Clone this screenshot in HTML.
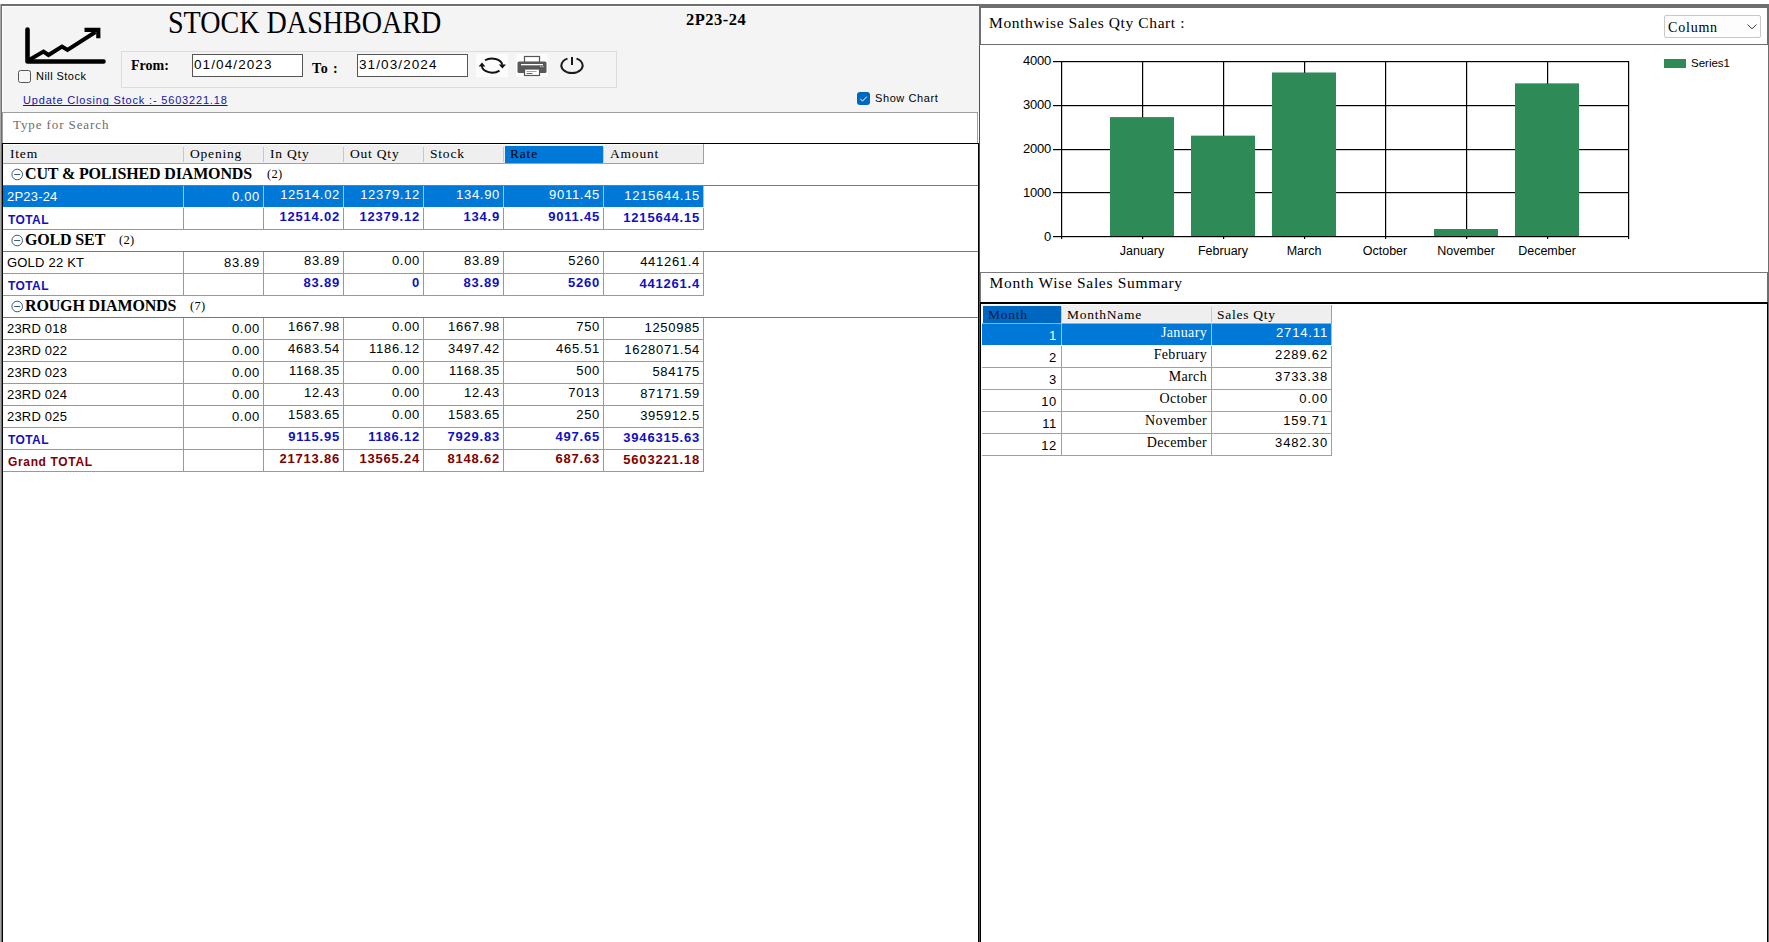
<!DOCTYPE html><html><head><meta charset="utf-8"><title>Stock Dashboard</title><style>
*{box-sizing:border-box;margin:0;padding:0}
html,body{width:1769px;height:942px;overflow:hidden;background:#fff;position:relative;font-family:'Liberation Sans', sans-serif}
.ab{position:absolute}
.t{position:absolute;white-space:pre;line-height:1}
.sr{font-family:'Liberation Serif', serif}
.sn{font-family:'Liberation Sans', sans-serif}
.num{letter-spacing:0.65px}
.gl{position:absolute;background:#a0a0a0}
</style></head><body>
<div class="ab" style="left:0px;top:4px;width:1769px;height:2px;background:#6e6e6e"></div>
<div class="ab" style="left:0px;top:4px;width:2px;height:938px;background:#6e6e6e;border-left:1px solid #a8a8a8"></div>
<div class="ab" style="left:2px;top:6px;width:977px;height:106px;background:#f4f4f4;border-top:1px solid #fff;border-left:1px solid #fff"></div>
<div class="ab" style="left:979px;top:6px;width:1px;height:137px;background:#7a7a7a"></div>
<svg class="ab" style="left:18px;top:22px" width="96" height="48" viewBox="18 22 96 48">
<path d="M27.5 29.5 V61.5 H103.5" fill="none" stroke="#000" stroke-width="4.6" stroke-linecap="round" stroke-linejoin="round"/>
<path d="M29 60 L43.5 51.5 L48.5 55 L62 46.5 L67.5 50 L95.5 32" fill="none" stroke="#000" stroke-width="4" stroke-linejoin="miter"/>
<path d="M84.5 29.8 H98.3 V38.3" fill="none" stroke="#000" stroke-width="4.2" stroke-linecap="butt" stroke-linejoin="miter"/>
</svg>
<div class="ab" style="left:18px;top:70px;width:13px;height:13px;border:1px solid #555;border-radius:2.5px;background:#f6f6f6"></div>
<div class="t" style="left:36px;top:71px;font-family:'Liberation Sans', sans-serif;font-size:11px;letter-spacing:0.45px;color:#000">Nill Stock</div>
<div class="t" style="left:168px;top:6.5px;font-family:'Liberation Serif', serif;font-size:31px;transform:scaleX(0.906);transform-origin:0 0;color:#000">STOCK DASHBOARD</div>
<div class="t" style="left:686px;top:12px;font-family:'Liberation Serif', serif;font-size:16.5px;font-weight:bold;letter-spacing:0.5px;color:#000">2P23-24</div>
<div class="ab" style="left:121px;top:51px;width:496px;height:37px;border:1px solid #dcdcdc"></div>
<div class="t" style="left:131px;top:58.8px;font-family:'Liberation Serif', serif;font-size:14px;font-weight:bold;color:#000">From:</div>
<div class="ab" style="left:192px;top:54px;width:111px;height:23px;background:#fff;border:1px solid #555"></div>
<div class="t" style="left:194px;top:58px;font-family:'Liberation Sans', sans-serif;font-size:13.5px;letter-spacing:1.1px;color:#000">01/04/2023</div>
<div class="t" style="left:312px;top:61.5px;font-family:'Liberation Serif', serif;font-size:14px;font-weight:bold;letter-spacing:0.8px;color:#000">To :</div>
<div class="ab" style="left:357px;top:54px;width:111px;height:23px;background:#fff;border:1px solid #555"></div>
<div class="t" style="left:359px;top:58px;font-family:'Liberation Sans', sans-serif;font-size:13.5px;letter-spacing:1.1px;color:#000">31/03/2024</div>
<div class="ab" style="left:476px;top:54px;width:32px;height:23px;background:#fcfcfc"></div>
<div class="ab" style="left:516px;top:54px;width:32px;height:23px;background:#fcfcfc"></div>
<svg class="ab" style="left:476px;top:54px" width="32" height="23" viewBox="476 54 32 23">
<path d="M485 60.3 A10.5 7.2 0 0 1 502.3 64.8" fill="none" stroke="#111" stroke-width="1.9"/>
<path d="M499.5 70.6 A10.5 7.2 0 0 1 481.8 66.2" fill="none" stroke="#111" stroke-width="1.9"/>
<path d="M498.8 64.4 L506 64.4 L502.4 68.6 Z" fill="#111"/>
<path d="M478.6 66.4 L485.4 66.4 L482 62.6 Z" fill="#111"/>
</svg>
<svg class="ab" style="left:516px;top:54px" width="32" height="24" viewBox="516 54 32 24">
<rect x="524.5" y="56.5" width="15" height="6" fill="#fff" stroke="#555" stroke-width="1.2"/>
<path d="M519 61.5 H545 A1.5 1.5 0 0 1 546.5 63 V71.5 A1.5 1.5 0 0 1 545 73 H519 A1.5 1.5 0 0 1 517.5 71.5 V63 A1.5 1.5 0 0 1 519 61.5 Z" fill="#585858"/>
<rect x="521" y="64" width="22" height="1.3" fill="#fff"/>
<rect x="540" y="66" width="1.5" height="1.2" fill="#aaa"/><rect x="542.2" y="66" width="1.5" height="1.2" fill="#aaa"/>
<rect x="524.5" y="69" width="15" height="6.5" fill="#fff" stroke="#555" stroke-width="1.2"/>
<rect x="526.5" y="71" width="10" height="0.9" fill="#999"/>
<rect x="526.5" y="73" width="6" height="0.9" fill="#555"/>
</svg>
<svg class="ab" style="left:556px;top:54px" width="32" height="24" viewBox="556 54 32 24">
<path d="M567.5 58.6 A10.6 7.6 0 1 0 576.5 58.6" fill="none" stroke="#1a1a1a" stroke-width="2"/>
<path d="M572 57 V65" fill="none" stroke="#1a1a1a" stroke-width="2"/>
</svg>
<div class="t" style="left:23px;top:94.5px;font-family:'Liberation Sans', sans-serif;font-size:11px;letter-spacing:0.82px;color:#1515a8;text-decoration:underline;text-decoration-skip-ink:none">Update Closing Stock :- 5603221.18</div>
<div class="ab" style="left:857px;top:92px;width:13px;height:13px;background:#0067c0;border-radius:3px"></div>
<svg class="ab" style="left:857px;top:92px" width="13" height="13" viewBox="0 0 13 13"><path d="M3.3 7 L5.6 9 L9.8 4.6" fill="none" stroke="#fff" stroke-width="1"/></svg>
<div class="t" style="left:875px;top:93px;font-family:'Liberation Sans', sans-serif;font-size:11px;letter-spacing:0.6px;color:#000">Show Chart</div>
<div class="ab" style="left:2px;top:112px;width:976px;height:31px;background:#fff;border:1px solid #a0a0a0;border-bottom:none"></div>
<div class="t" style="left:13px;top:118px;font-family:'Liberation Serif', serif;font-size:13px;letter-spacing:0.9px;color:#6d6d6d">Type for Search</div>
<div class="ab" style="left:2px;top:143px;width:977px;height:799px;background:#fff;border-top:1px solid #000;border-left:1px solid #000;border-right:1px solid #000"></div>
<div class="ab" style="left:3px;top:145px;width:700px;height:18px;background:#efefef"></div>
<div class="ab" style="left:505px;top:146px;width:98px;height:17px;background:#0078d7"></div>
<div class="ab" style="left:3px;top:163px;width:701px;height:1px;background:#a0a0a0"></div>
<div class="ab" style="left:703px;top:144px;width:1px;height:20px;background:#a0a0a0"></div>
<div class="ab" style="left:183px;top:147px;width:1px;height:15px;background:#c8c8c8"></div>
<div class="ab" style="left:263px;top:147px;width:1px;height:15px;background:#c8c8c8"></div>
<div class="ab" style="left:343px;top:147px;width:1px;height:15px;background:#c8c8c8"></div>
<div class="ab" style="left:423px;top:147px;width:1px;height:15px;background:#c8c8c8"></div>
<div class="ab" style="left:503px;top:147px;width:1px;height:15px;background:#c8c8c8"></div>
<div class="ab" style="left:603px;top:147px;width:1px;height:15px;background:#c8c8c8"></div>
<div class="t" style="left:10px;top:147px;font-family:'Liberation Serif', serif;font-size:13.5px;letter-spacing:0.8px;color:#000">Item</div>
<div class="t" style="left:190px;top:147px;font-family:'Liberation Serif', serif;font-size:13.5px;letter-spacing:0.8px;color:#000">Opening</div>
<div class="t" style="left:270px;top:147px;font-family:'Liberation Serif', serif;font-size:13.5px;letter-spacing:0.8px;color:#000">In Qty</div>
<div class="t" style="left:350px;top:147px;font-family:'Liberation Serif', serif;font-size:13.5px;letter-spacing:0.8px;color:#000">Out Qty</div>
<div class="t" style="left:430px;top:147px;font-family:'Liberation Serif', serif;font-size:13.5px;letter-spacing:0.8px;color:#000">Stock</div>
<div class="t" style="left:510px;top:147px;font-family:'Liberation Serif', serif;font-size:13.5px;letter-spacing:0.8px;color:#000">Rate</div>
<div class="t" style="left:610px;top:147px;font-family:'Liberation Serif', serif;font-size:13.5px;letter-spacing:0.8px;color:#000">Amount</div>
<div class="ab" style="left:3px;top:185px;width:975px;height:1px;background:#5b7fa6"></div>
<svg class="ab" style="left:11px;top:168px" width="13" height="13" viewBox="0 0 13 13"><circle cx="6.2" cy="6.5" r="5.3" fill="none" stroke="#3a5a7a" stroke-width="1"/><path d="M3.2 6.5 H9.2" stroke="#3a5a7a" stroke-width="1"/></svg>
<div class="t" style="left:25px;top:166px;font-family:'Liberation Serif', serif;font-size:16px;font-weight:bold;letter-spacing:-0.15px;color:#000">CUT &amp; POLISHED DIAMONDS</div>
<div class="t" style="left:267px;top:168px;font-family:'Liberation Serif', serif;font-size:12.5px;letter-spacing:0.3px;color:#000">(2)</div>
<div class="ab" style="left:3px;top:186px;width:700px;height:21px;background:#0078d7"></div>
<div class="ab" style="left:183px;top:186px;width:1px;height:21px;background:#9cc4ea"></div>
<div class="ab" style="left:263px;top:186px;width:1px;height:21px;background:#9cc4ea"></div>
<div class="ab" style="left:343px;top:186px;width:1px;height:21px;background:#9cc4ea"></div>
<div class="ab" style="left:423px;top:186px;width:1px;height:21px;background:#9cc4ea"></div>
<div class="ab" style="left:503px;top:186px;width:1px;height:21px;background:#9cc4ea"></div>
<div class="ab" style="left:603px;top:186px;width:1px;height:21px;background:#9cc4ea"></div>
<div class="ab" style="left:703px;top:186px;width:1px;height:21px;background:#9cc4ea"></div>
<div class="t" style="left:7px;top:190px;font-family:'Liberation Sans', sans-serif;font-size:13px;letter-spacing:0.2px;color:#fff">2P23-24</div>
<div class="t" style="right:1509px;top:190.3px;font-family:'Liberation Sans', sans-serif;font-size:13px;letter-spacing:0.7px;font-weight:normal;color:#fff">0.00</div>
<div class="t" style="right:1429px;top:188px;font-family:'Liberation Sans', sans-serif;font-size:13px;letter-spacing:0.7px;font-weight:normal;color:#fff">12514.02</div>
<div class="t" style="right:1349px;top:188px;font-family:'Liberation Sans', sans-serif;font-size:13px;letter-spacing:0.7px;font-weight:normal;color:#fff">12379.12</div>
<div class="t" style="right:1269px;top:188px;font-family:'Liberation Sans', sans-serif;font-size:13px;letter-spacing:0.7px;font-weight:normal;color:#fff">134.90</div>
<div class="t" style="right:1169px;top:188px;font-family:'Liberation Sans', sans-serif;font-size:13px;letter-spacing:0.7px;font-weight:normal;color:#fff">9011.45</div>
<div class="t" style="right:1069px;top:189px;font-family:'Liberation Sans', sans-serif;font-size:13px;letter-spacing:0.7px;font-weight:normal;color:#fff">1215644.15</div>
<div class="ab" style="left:3px;top:229px;width:701px;height:1px;background:#999999"></div>
<div class="ab" style="left:183px;top:208px;width:1px;height:22px;background:#999999"></div>
<div class="ab" style="left:263px;top:208px;width:1px;height:22px;background:#999999"></div>
<div class="ab" style="left:343px;top:208px;width:1px;height:22px;background:#999999"></div>
<div class="ab" style="left:423px;top:208px;width:1px;height:22px;background:#999999"></div>
<div class="ab" style="left:503px;top:208px;width:1px;height:22px;background:#999999"></div>
<div class="ab" style="left:603px;top:208px;width:1px;height:22px;background:#999999"></div>
<div class="ab" style="left:703px;top:208px;width:1px;height:22px;background:#999999"></div>
<div class="t" style="left:8px;top:214px;font-family:'Liberation Sans', sans-serif;font-size:12px;font-weight:bold;letter-spacing:0.4px;color:#1010c4">TOTAL</div>
<div class="t" style="right:1429px;top:210px;font-family:'Liberation Sans', sans-serif;font-size:13px;letter-spacing:0.8px;font-weight:bold;color:#1010c4">12514.02</div>
<div class="t" style="right:1349px;top:210px;font-family:'Liberation Sans', sans-serif;font-size:13px;letter-spacing:0.8px;font-weight:bold;color:#1010c4">12379.12</div>
<div class="t" style="right:1269px;top:210px;font-family:'Liberation Sans', sans-serif;font-size:13px;letter-spacing:0.8px;font-weight:bold;color:#1010c4">134.9</div>
<div class="t" style="right:1169px;top:210px;font-family:'Liberation Sans', sans-serif;font-size:13px;letter-spacing:0.8px;font-weight:bold;color:#1010c4">9011.45</div>
<div class="t" style="right:1069px;top:211px;font-family:'Liberation Sans', sans-serif;font-size:13px;letter-spacing:0.8px;font-weight:bold;color:#1010c4">1215644.15</div>
<div class="ab" style="left:3px;top:251px;width:975px;height:1px;background:#5b7fa6"></div>
<svg class="ab" style="left:11px;top:234px" width="13" height="13" viewBox="0 0 13 13"><circle cx="6.2" cy="6.5" r="5.3" fill="none" stroke="#3a5a7a" stroke-width="1"/><path d="M3.2 6.5 H9.2" stroke="#3a5a7a" stroke-width="1"/></svg>
<div class="t" style="left:25px;top:232px;font-family:'Liberation Serif', serif;font-size:16px;font-weight:bold;letter-spacing:-0.15px;color:#000">GOLD SET</div>
<div class="t" style="left:119px;top:234px;font-family:'Liberation Serif', serif;font-size:12.5px;letter-spacing:0.3px;color:#000">(2)</div>
<div class="ab" style="left:3px;top:273px;width:701px;height:1px;background:#999999"></div>
<div class="ab" style="left:183px;top:252px;width:1px;height:22px;background:#999999"></div>
<div class="ab" style="left:263px;top:252px;width:1px;height:22px;background:#999999"></div>
<div class="ab" style="left:343px;top:252px;width:1px;height:22px;background:#999999"></div>
<div class="ab" style="left:423px;top:252px;width:1px;height:22px;background:#999999"></div>
<div class="ab" style="left:503px;top:252px;width:1px;height:22px;background:#999999"></div>
<div class="ab" style="left:603px;top:252px;width:1px;height:22px;background:#999999"></div>
<div class="ab" style="left:703px;top:252px;width:1px;height:22px;background:#999999"></div>
<div class="t" style="left:7px;top:256px;font-family:'Liberation Sans', sans-serif;font-size:13px;letter-spacing:0.2px;color:#000">GOLD 22 KT</div>
<div class="t" style="right:1509px;top:256.3px;font-family:'Liberation Sans', sans-serif;font-size:13px;letter-spacing:0.7px;font-weight:normal;color:#000">83.89</div>
<div class="t" style="right:1429px;top:254px;font-family:'Liberation Sans', sans-serif;font-size:13px;letter-spacing:0.7px;font-weight:normal;color:#000">83.89</div>
<div class="t" style="right:1349px;top:254px;font-family:'Liberation Sans', sans-serif;font-size:13px;letter-spacing:0.7px;font-weight:normal;color:#000">0.00</div>
<div class="t" style="right:1269px;top:254px;font-family:'Liberation Sans', sans-serif;font-size:13px;letter-spacing:0.7px;font-weight:normal;color:#000">83.89</div>
<div class="t" style="right:1169px;top:254px;font-family:'Liberation Sans', sans-serif;font-size:13px;letter-spacing:0.7px;font-weight:normal;color:#000">5260</div>
<div class="t" style="right:1069px;top:255px;font-family:'Liberation Sans', sans-serif;font-size:13px;letter-spacing:0.7px;font-weight:normal;color:#000">441261.4</div>
<div class="ab" style="left:3px;top:295px;width:701px;height:1px;background:#999999"></div>
<div class="ab" style="left:183px;top:274px;width:1px;height:22px;background:#999999"></div>
<div class="ab" style="left:263px;top:274px;width:1px;height:22px;background:#999999"></div>
<div class="ab" style="left:343px;top:274px;width:1px;height:22px;background:#999999"></div>
<div class="ab" style="left:423px;top:274px;width:1px;height:22px;background:#999999"></div>
<div class="ab" style="left:503px;top:274px;width:1px;height:22px;background:#999999"></div>
<div class="ab" style="left:603px;top:274px;width:1px;height:22px;background:#999999"></div>
<div class="ab" style="left:703px;top:274px;width:1px;height:22px;background:#999999"></div>
<div class="t" style="left:8px;top:280px;font-family:'Liberation Sans', sans-serif;font-size:12px;font-weight:bold;letter-spacing:0.4px;color:#1010c4">TOTAL</div>
<div class="t" style="right:1429px;top:276px;font-family:'Liberation Sans', sans-serif;font-size:13px;letter-spacing:0.8px;font-weight:bold;color:#1010c4">83.89</div>
<div class="t" style="right:1349px;top:276px;font-family:'Liberation Sans', sans-serif;font-size:13px;letter-spacing:0.8px;font-weight:bold;color:#1010c4">0</div>
<div class="t" style="right:1269px;top:276px;font-family:'Liberation Sans', sans-serif;font-size:13px;letter-spacing:0.8px;font-weight:bold;color:#1010c4">83.89</div>
<div class="t" style="right:1169px;top:276px;font-family:'Liberation Sans', sans-serif;font-size:13px;letter-spacing:0.8px;font-weight:bold;color:#1010c4">5260</div>
<div class="t" style="right:1069px;top:277px;font-family:'Liberation Sans', sans-serif;font-size:13px;letter-spacing:0.8px;font-weight:bold;color:#1010c4">441261.4</div>
<div class="ab" style="left:3px;top:317px;width:975px;height:1px;background:#5b7fa6"></div>
<svg class="ab" style="left:11px;top:300px" width="13" height="13" viewBox="0 0 13 13"><circle cx="6.2" cy="6.5" r="5.3" fill="none" stroke="#3a5a7a" stroke-width="1"/><path d="M3.2 6.5 H9.2" stroke="#3a5a7a" stroke-width="1"/></svg>
<div class="t" style="left:25px;top:298px;font-family:'Liberation Serif', serif;font-size:16px;font-weight:bold;letter-spacing:-0.15px;color:#000">ROUGH DIAMONDS</div>
<div class="t" style="left:190px;top:300px;font-family:'Liberation Serif', serif;font-size:12.5px;letter-spacing:0.3px;color:#000">(7)</div>
<div class="ab" style="left:3px;top:339px;width:701px;height:1px;background:#999999"></div>
<div class="ab" style="left:183px;top:318px;width:1px;height:22px;background:#999999"></div>
<div class="ab" style="left:263px;top:318px;width:1px;height:22px;background:#999999"></div>
<div class="ab" style="left:343px;top:318px;width:1px;height:22px;background:#999999"></div>
<div class="ab" style="left:423px;top:318px;width:1px;height:22px;background:#999999"></div>
<div class="ab" style="left:503px;top:318px;width:1px;height:22px;background:#999999"></div>
<div class="ab" style="left:603px;top:318px;width:1px;height:22px;background:#999999"></div>
<div class="ab" style="left:703px;top:318px;width:1px;height:22px;background:#999999"></div>
<div class="t" style="left:7px;top:322px;font-family:'Liberation Sans', sans-serif;font-size:13px;letter-spacing:0.2px;color:#000">23RD 018</div>
<div class="t" style="right:1509px;top:322.3px;font-family:'Liberation Sans', sans-serif;font-size:13px;letter-spacing:0.7px;font-weight:normal;color:#000">0.00</div>
<div class="t" style="right:1429px;top:320px;font-family:'Liberation Sans', sans-serif;font-size:13px;letter-spacing:0.7px;font-weight:normal;color:#000">1667.98</div>
<div class="t" style="right:1349px;top:320px;font-family:'Liberation Sans', sans-serif;font-size:13px;letter-spacing:0.7px;font-weight:normal;color:#000">0.00</div>
<div class="t" style="right:1269px;top:320px;font-family:'Liberation Sans', sans-serif;font-size:13px;letter-spacing:0.7px;font-weight:normal;color:#000">1667.98</div>
<div class="t" style="right:1169px;top:320px;font-family:'Liberation Sans', sans-serif;font-size:13px;letter-spacing:0.7px;font-weight:normal;color:#000">750</div>
<div class="t" style="right:1069px;top:321px;font-family:'Liberation Sans', sans-serif;font-size:13px;letter-spacing:0.7px;font-weight:normal;color:#000">1250985</div>
<div class="ab" style="left:3px;top:361px;width:701px;height:1px;background:#999999"></div>
<div class="ab" style="left:183px;top:340px;width:1px;height:22px;background:#999999"></div>
<div class="ab" style="left:263px;top:340px;width:1px;height:22px;background:#999999"></div>
<div class="ab" style="left:343px;top:340px;width:1px;height:22px;background:#999999"></div>
<div class="ab" style="left:423px;top:340px;width:1px;height:22px;background:#999999"></div>
<div class="ab" style="left:503px;top:340px;width:1px;height:22px;background:#999999"></div>
<div class="ab" style="left:603px;top:340px;width:1px;height:22px;background:#999999"></div>
<div class="ab" style="left:703px;top:340px;width:1px;height:22px;background:#999999"></div>
<div class="t" style="left:7px;top:344px;font-family:'Liberation Sans', sans-serif;font-size:13px;letter-spacing:0.2px;color:#000">23RD 022</div>
<div class="t" style="right:1509px;top:344.3px;font-family:'Liberation Sans', sans-serif;font-size:13px;letter-spacing:0.7px;font-weight:normal;color:#000">0.00</div>
<div class="t" style="right:1429px;top:342px;font-family:'Liberation Sans', sans-serif;font-size:13px;letter-spacing:0.7px;font-weight:normal;color:#000">4683.54</div>
<div class="t" style="right:1349px;top:342px;font-family:'Liberation Sans', sans-serif;font-size:13px;letter-spacing:0.7px;font-weight:normal;color:#000">1186.12</div>
<div class="t" style="right:1269px;top:342px;font-family:'Liberation Sans', sans-serif;font-size:13px;letter-spacing:0.7px;font-weight:normal;color:#000">3497.42</div>
<div class="t" style="right:1169px;top:342px;font-family:'Liberation Sans', sans-serif;font-size:13px;letter-spacing:0.7px;font-weight:normal;color:#000">465.51</div>
<div class="t" style="right:1069px;top:343px;font-family:'Liberation Sans', sans-serif;font-size:13px;letter-spacing:0.7px;font-weight:normal;color:#000">1628071.54</div>
<div class="ab" style="left:3px;top:383px;width:701px;height:1px;background:#999999"></div>
<div class="ab" style="left:183px;top:362px;width:1px;height:22px;background:#999999"></div>
<div class="ab" style="left:263px;top:362px;width:1px;height:22px;background:#999999"></div>
<div class="ab" style="left:343px;top:362px;width:1px;height:22px;background:#999999"></div>
<div class="ab" style="left:423px;top:362px;width:1px;height:22px;background:#999999"></div>
<div class="ab" style="left:503px;top:362px;width:1px;height:22px;background:#999999"></div>
<div class="ab" style="left:603px;top:362px;width:1px;height:22px;background:#999999"></div>
<div class="ab" style="left:703px;top:362px;width:1px;height:22px;background:#999999"></div>
<div class="t" style="left:7px;top:366px;font-family:'Liberation Sans', sans-serif;font-size:13px;letter-spacing:0.2px;color:#000">23RD 023</div>
<div class="t" style="right:1509px;top:366.3px;font-family:'Liberation Sans', sans-serif;font-size:13px;letter-spacing:0.7px;font-weight:normal;color:#000">0.00</div>
<div class="t" style="right:1429px;top:364px;font-family:'Liberation Sans', sans-serif;font-size:13px;letter-spacing:0.7px;font-weight:normal;color:#000">1168.35</div>
<div class="t" style="right:1349px;top:364px;font-family:'Liberation Sans', sans-serif;font-size:13px;letter-spacing:0.7px;font-weight:normal;color:#000">0.00</div>
<div class="t" style="right:1269px;top:364px;font-family:'Liberation Sans', sans-serif;font-size:13px;letter-spacing:0.7px;font-weight:normal;color:#000">1168.35</div>
<div class="t" style="right:1169px;top:364px;font-family:'Liberation Sans', sans-serif;font-size:13px;letter-spacing:0.7px;font-weight:normal;color:#000">500</div>
<div class="t" style="right:1069px;top:365px;font-family:'Liberation Sans', sans-serif;font-size:13px;letter-spacing:0.7px;font-weight:normal;color:#000">584175</div>
<div class="ab" style="left:3px;top:405px;width:701px;height:1px;background:#999999"></div>
<div class="ab" style="left:183px;top:384px;width:1px;height:22px;background:#999999"></div>
<div class="ab" style="left:263px;top:384px;width:1px;height:22px;background:#999999"></div>
<div class="ab" style="left:343px;top:384px;width:1px;height:22px;background:#999999"></div>
<div class="ab" style="left:423px;top:384px;width:1px;height:22px;background:#999999"></div>
<div class="ab" style="left:503px;top:384px;width:1px;height:22px;background:#999999"></div>
<div class="ab" style="left:603px;top:384px;width:1px;height:22px;background:#999999"></div>
<div class="ab" style="left:703px;top:384px;width:1px;height:22px;background:#999999"></div>
<div class="t" style="left:7px;top:388px;font-family:'Liberation Sans', sans-serif;font-size:13px;letter-spacing:0.2px;color:#000">23RD 024</div>
<div class="t" style="right:1509px;top:388.3px;font-family:'Liberation Sans', sans-serif;font-size:13px;letter-spacing:0.7px;font-weight:normal;color:#000">0.00</div>
<div class="t" style="right:1429px;top:386px;font-family:'Liberation Sans', sans-serif;font-size:13px;letter-spacing:0.7px;font-weight:normal;color:#000">12.43</div>
<div class="t" style="right:1349px;top:386px;font-family:'Liberation Sans', sans-serif;font-size:13px;letter-spacing:0.7px;font-weight:normal;color:#000">0.00</div>
<div class="t" style="right:1269px;top:386px;font-family:'Liberation Sans', sans-serif;font-size:13px;letter-spacing:0.7px;font-weight:normal;color:#000">12.43</div>
<div class="t" style="right:1169px;top:386px;font-family:'Liberation Sans', sans-serif;font-size:13px;letter-spacing:0.7px;font-weight:normal;color:#000">7013</div>
<div class="t" style="right:1069px;top:387px;font-family:'Liberation Sans', sans-serif;font-size:13px;letter-spacing:0.7px;font-weight:normal;color:#000">87171.59</div>
<div class="ab" style="left:3px;top:427px;width:701px;height:1px;background:#999999"></div>
<div class="ab" style="left:183px;top:406px;width:1px;height:22px;background:#999999"></div>
<div class="ab" style="left:263px;top:406px;width:1px;height:22px;background:#999999"></div>
<div class="ab" style="left:343px;top:406px;width:1px;height:22px;background:#999999"></div>
<div class="ab" style="left:423px;top:406px;width:1px;height:22px;background:#999999"></div>
<div class="ab" style="left:503px;top:406px;width:1px;height:22px;background:#999999"></div>
<div class="ab" style="left:603px;top:406px;width:1px;height:22px;background:#999999"></div>
<div class="ab" style="left:703px;top:406px;width:1px;height:22px;background:#999999"></div>
<div class="t" style="left:7px;top:410px;font-family:'Liberation Sans', sans-serif;font-size:13px;letter-spacing:0.2px;color:#000">23RD 025</div>
<div class="t" style="right:1509px;top:410.3px;font-family:'Liberation Sans', sans-serif;font-size:13px;letter-spacing:0.7px;font-weight:normal;color:#000">0.00</div>
<div class="t" style="right:1429px;top:408px;font-family:'Liberation Sans', sans-serif;font-size:13px;letter-spacing:0.7px;font-weight:normal;color:#000">1583.65</div>
<div class="t" style="right:1349px;top:408px;font-family:'Liberation Sans', sans-serif;font-size:13px;letter-spacing:0.7px;font-weight:normal;color:#000">0.00</div>
<div class="t" style="right:1269px;top:408px;font-family:'Liberation Sans', sans-serif;font-size:13px;letter-spacing:0.7px;font-weight:normal;color:#000">1583.65</div>
<div class="t" style="right:1169px;top:408px;font-family:'Liberation Sans', sans-serif;font-size:13px;letter-spacing:0.7px;font-weight:normal;color:#000">250</div>
<div class="t" style="right:1069px;top:409px;font-family:'Liberation Sans', sans-serif;font-size:13px;letter-spacing:0.7px;font-weight:normal;color:#000">395912.5</div>
<div class="ab" style="left:3px;top:449px;width:701px;height:1px;background:#999999"></div>
<div class="ab" style="left:183px;top:428px;width:1px;height:22px;background:#999999"></div>
<div class="ab" style="left:263px;top:428px;width:1px;height:22px;background:#999999"></div>
<div class="ab" style="left:343px;top:428px;width:1px;height:22px;background:#999999"></div>
<div class="ab" style="left:423px;top:428px;width:1px;height:22px;background:#999999"></div>
<div class="ab" style="left:503px;top:428px;width:1px;height:22px;background:#999999"></div>
<div class="ab" style="left:603px;top:428px;width:1px;height:22px;background:#999999"></div>
<div class="ab" style="left:703px;top:428px;width:1px;height:22px;background:#999999"></div>
<div class="t" style="left:8px;top:434px;font-family:'Liberation Sans', sans-serif;font-size:12px;font-weight:bold;letter-spacing:0.4px;color:#1010c4">TOTAL</div>
<div class="t" style="right:1429px;top:430px;font-family:'Liberation Sans', sans-serif;font-size:13px;letter-spacing:0.8px;font-weight:bold;color:#1010c4">9115.95</div>
<div class="t" style="right:1349px;top:430px;font-family:'Liberation Sans', sans-serif;font-size:13px;letter-spacing:0.8px;font-weight:bold;color:#1010c4">1186.12</div>
<div class="t" style="right:1269px;top:430px;font-family:'Liberation Sans', sans-serif;font-size:13px;letter-spacing:0.8px;font-weight:bold;color:#1010c4">7929.83</div>
<div class="t" style="right:1169px;top:430px;font-family:'Liberation Sans', sans-serif;font-size:13px;letter-spacing:0.8px;font-weight:bold;color:#1010c4">497.65</div>
<div class="t" style="right:1069px;top:431px;font-family:'Liberation Sans', sans-serif;font-size:13px;letter-spacing:0.8px;font-weight:bold;color:#1010c4">3946315.63</div>
<div class="ab" style="left:3px;top:471px;width:701px;height:1px;background:#999999"></div>
<div class="ab" style="left:183px;top:450px;width:1px;height:22px;background:#999999"></div>
<div class="ab" style="left:263px;top:450px;width:1px;height:22px;background:#999999"></div>
<div class="ab" style="left:343px;top:450px;width:1px;height:22px;background:#999999"></div>
<div class="ab" style="left:423px;top:450px;width:1px;height:22px;background:#999999"></div>
<div class="ab" style="left:503px;top:450px;width:1px;height:22px;background:#999999"></div>
<div class="ab" style="left:603px;top:450px;width:1px;height:22px;background:#999999"></div>
<div class="ab" style="left:703px;top:450px;width:1px;height:22px;background:#999999"></div>
<div class="t" style="left:8px;top:455.5px;font-family:'Liberation Sans', sans-serif;font-size:12px;font-weight:bold;letter-spacing:0.65px;color:#800000">Grand TOTAL</div>
<div class="t" style="right:1429px;top:452px;font-family:'Liberation Sans', sans-serif;font-size:13px;letter-spacing:0.8px;font-weight:bold;color:#800000">21713.86</div>
<div class="t" style="right:1349px;top:452px;font-family:'Liberation Sans', sans-serif;font-size:13px;letter-spacing:0.8px;font-weight:bold;color:#800000">13565.24</div>
<div class="t" style="right:1269px;top:452px;font-family:'Liberation Sans', sans-serif;font-size:13px;letter-spacing:0.8px;font-weight:bold;color:#800000">8148.62</div>
<div class="t" style="right:1169px;top:452px;font-family:'Liberation Sans', sans-serif;font-size:13px;letter-spacing:0.8px;font-weight:bold;color:#800000">687.63</div>
<div class="t" style="right:1069px;top:453px;font-family:'Liberation Sans', sans-serif;font-size:13px;letter-spacing:0.8px;font-weight:bold;color:#800000">5603221.18</div>
<div class="ab" style="left:979px;top:6px;width:790px;height:936px;background:#fff"></div>
<div class="ab" style="left:979px;top:6px;width:2px;height:39px;background:#6e6e6e"></div>
<div class="ab" style="left:979px;top:45px;width:1px;height:897px;background:#505050"></div>
<div class="ab" style="left:1767px;top:4px;width:2px;height:938px;background:#6e6e6e"></div>
<div class="ab" style="left:1767px;top:45px;width:1px;height:227px;background:#fff"></div>
<div class="ab" style="left:1767px;top:303px;width:1px;height:639px;background:#000"></div>
<div class="ab" style="left:979px;top:4px;width:790px;height:4px;background:#6e6e6e"></div>
<div class="ab" style="left:979px;top:44px;width:789px;height:1px;background:#6e6e6e"></div>
<div class="t" style="left:989px;top:15px;font-family:'Liberation Serif', serif;font-size:15.5px;letter-spacing:0.6px;color:#000">Monthwise Sales Qty Chart :</div>
<div class="ab" style="left:1664px;top:15px;width:97px;height:23px;background:#fdfdfd;border:1px solid #c8c8c8;border-radius:2px"></div>
<div class="t" style="left:1668px;top:20.5px;font-family:'Liberation Serif', serif;font-size:14px;letter-spacing:0.8px;color:#000">Column</div>
<svg class="ab" style="left:1745px;top:22px" width="14" height="9" viewBox="0 0 14 9"><path d="M2.5 2.5 L7 6.8 L11.5 2.5" fill="none" stroke="#444" stroke-width="1"/></svg>
<svg class="ab" style="left:980px;top:45px" width="787" height="226" viewBox="980 45 787 226">
<rect x="1110" y="117.3" width="64" height="118.7" fill="#2e8b57"/>
<rect x="1191" y="135.8" width="64" height="100.2" fill="#2e8b57"/>
<rect x="1272" y="72.7" width="64" height="163.3" fill="#2e8b57"/>
<rect x="1434" y="229.0" width="64" height="7.0" fill="#2e8b57"/>
<rect x="1515" y="83.6" width="64" height="152.4" fill="#2e8b57"/>
<rect x="1053" y="61" width="576" height="1.2" fill="#000"/>
<rect x="1053" y="105" width="576" height="1.2" fill="#000"/>
<rect x="1053" y="149" width="576" height="1.2" fill="#000"/>
<rect x="1053" y="192" width="576" height="1.2" fill="#000"/>
<rect x="1053" y="236" width="576" height="1.2" fill="#000"/>
<rect x="1061" y="61" width="1.2" height="178" fill="#000"/>
<rect x="1142" y="61" width="1.2" height="178" fill="#000"/>
<rect x="1223" y="61" width="1.2" height="178" fill="#000"/>
<rect x="1304" y="61" width="1.2" height="178" fill="#000"/>
<rect x="1385" y="61" width="1.2" height="178" fill="#000"/>
<rect x="1466" y="61" width="1.2" height="178" fill="#000"/>
<rect x="1547" y="61" width="1.2" height="178" fill="#000"/>
<rect x="1628" y="61" width="1.2" height="178" fill="#000"/>
<rect x="1110" y="117.3" width="64" height="118.7" fill="#2e8b57"/>
<rect x="1191" y="135.8" width="64" height="100.2" fill="#2e8b57"/>
<rect x="1272" y="72.7" width="64" height="163.3" fill="#2e8b57"/>
<rect x="1434" y="229.0" width="64" height="7.0" fill="#2e8b57"/>
<rect x="1515" y="83.6" width="64" height="152.4" fill="#2e8b57"/>
</svg>
<div class="t" style="right:718px;top:54px;font-family:'Liberation Sans', sans-serif;font-size:13px;letter-spacing:-0.2px;color:#000">4000</div>
<div class="t" style="right:718px;top:98px;font-family:'Liberation Sans', sans-serif;font-size:13px;letter-spacing:-0.2px;color:#000">3000</div>
<div class="t" style="right:718px;top:142px;font-family:'Liberation Sans', sans-serif;font-size:13px;letter-spacing:-0.2px;color:#000">2000</div>
<div class="t" style="right:718px;top:186px;font-family:'Liberation Sans', sans-serif;font-size:13px;letter-spacing:-0.2px;color:#000">1000</div>
<div class="t" style="right:718px;top:230px;font-family:'Liberation Sans', sans-serif;font-size:13px;letter-spacing:-0.2px;color:#000">0</div>
<div class="t" style="left:1082px;width:120px;text-align:center;top:245px;font-family:'Liberation Sans', sans-serif;font-size:12.5px;color:#000">January</div>
<div class="t" style="left:1163px;width:120px;text-align:center;top:245px;font-family:'Liberation Sans', sans-serif;font-size:12.5px;color:#000">February</div>
<div class="t" style="left:1244px;width:120px;text-align:center;top:245px;font-family:'Liberation Sans', sans-serif;font-size:12.5px;color:#000">March</div>
<div class="t" style="left:1325px;width:120px;text-align:center;top:245px;font-family:'Liberation Sans', sans-serif;font-size:12.5px;color:#000">October</div>
<div class="t" style="left:1406px;width:120px;text-align:center;top:245px;font-family:'Liberation Sans', sans-serif;font-size:12.5px;color:#000">November</div>
<div class="t" style="left:1487px;width:120px;text-align:center;top:245px;font-family:'Liberation Sans', sans-serif;font-size:12.5px;color:#000">December</div>
<div class="ab" style="left:1664px;top:59px;width:22px;height:9px;background:#2e8b57"></div>
<div class="t" style="left:1691px;top:58px;font-family:'Liberation Sans', sans-serif;font-size:11.5px;color:#000">Series1</div>
<div class="ab" style="left:980px;top:272px;width:788px;height:1px;background:#7a7a7a"></div>
<div class="ab" style="left:980px;top:272px;width:1px;height:31px;background:#7a7a7a"></div>
<div class="t" style="left:989.5px;top:275px;font-family:'Liberation Serif', serif;font-size:15.5px;letter-spacing:0.68px;color:#000">Month Wise Sales Summary</div>
<div class="ab" style="left:980px;top:302px;width:788px;height:2px;background:#000"></div>
<div class="ab" style="left:980px;top:302px;width:1px;height:640px;background:#000"></div>
<div class="ab" style="left:983px;top:305px;width:348px;height:18px;background:#efefef"></div>
<div class="ab" style="left:983px;top:306px;width:78px;height:17px;background:#0067c0"></div>
<div class="ab" style="left:1331px;top:305px;width:1px;height:18px;background:#a0a0a0"></div>
<div class="ab" style="left:982px;top:323px;width:350px;height:1px;background:#7fb4e6"></div>
<div class="ab" style="left:1061px;top:307px;width:1px;height:15px;background:#c8c8c8"></div>
<div class="ab" style="left:1211px;top:307px;width:1px;height:15px;background:#c8c8c8"></div>
<div class="t" style="left:988px;top:307.5px;font-family:'Liberation Serif', serif;font-size:13.5px;letter-spacing:0.75px;color:#0a1a40">Month</div>
<div class="t" style="left:1067px;top:307.5px;font-family:'Liberation Serif', serif;font-size:13.5px;letter-spacing:0.75px;color:#000">MonthName</div>
<div class="t" style="left:1217px;top:307.5px;font-family:'Liberation Serif', serif;font-size:13.5px;letter-spacing:0.75px;color:#000">Sales Qty</div>
<div class="ab" style="left:982px;top:324px;width:349px;height:21px;background:#0078d7"></div>
<div class="ab" style="left:1061px;top:324px;width:1px;height:21px;background:#9cc4ea"></div>
<div class="ab" style="left:1211px;top:324px;width:1px;height:21px;background:#9cc4ea"></div>
<div class="ab" style="left:1331px;top:324px;width:1px;height:21px;background:#9cc4ea"></div>
<div class="t" style="right:712px;top:328.5px;font-family:'Liberation Sans', sans-serif;font-size:13px;letter-spacing:0.65px;color:#fff">1</div>
<div class="t" style="right:562px;top:326px;font-family:'Liberation Serif', serif;font-size:14px;letter-spacing:0.35px;color:#fff">January</div>
<div class="t" style="right:441px;top:326px;font-family:'Liberation Sans', sans-serif;font-size:13px;letter-spacing:0.85px;color:#fff">2714.11</div>
<div class="ab" style="left:982px;top:367px;width:350px;height:1px;background:#a0a0a0"></div>
<div class="ab" style="left:1061px;top:346px;width:1px;height:22px;background:#a0a0a0"></div>
<div class="ab" style="left:1211px;top:346px;width:1px;height:22px;background:#a0a0a0"></div>
<div class="ab" style="left:1331px;top:346px;width:1px;height:22px;background:#a0a0a0"></div>
<div class="t" style="right:712px;top:350.5px;font-family:'Liberation Sans', sans-serif;font-size:13px;letter-spacing:0.65px;color:#000">2</div>
<div class="t" style="right:562px;top:348px;font-family:'Liberation Serif', serif;font-size:14px;letter-spacing:0.35px;color:#000">February</div>
<div class="t" style="right:441px;top:348px;font-family:'Liberation Sans', sans-serif;font-size:13px;letter-spacing:0.85px;color:#000">2289.62</div>
<div class="ab" style="left:982px;top:389px;width:350px;height:1px;background:#a0a0a0"></div>
<div class="ab" style="left:1061px;top:368px;width:1px;height:22px;background:#a0a0a0"></div>
<div class="ab" style="left:1211px;top:368px;width:1px;height:22px;background:#a0a0a0"></div>
<div class="ab" style="left:1331px;top:368px;width:1px;height:22px;background:#a0a0a0"></div>
<div class="t" style="right:712px;top:372.5px;font-family:'Liberation Sans', sans-serif;font-size:13px;letter-spacing:0.65px;color:#000">3</div>
<div class="t" style="right:562px;top:370px;font-family:'Liberation Serif', serif;font-size:14px;letter-spacing:0.35px;color:#000">March</div>
<div class="t" style="right:441px;top:370px;font-family:'Liberation Sans', sans-serif;font-size:13px;letter-spacing:0.85px;color:#000">3733.38</div>
<div class="ab" style="left:982px;top:411px;width:350px;height:1px;background:#a0a0a0"></div>
<div class="ab" style="left:1061px;top:390px;width:1px;height:22px;background:#a0a0a0"></div>
<div class="ab" style="left:1211px;top:390px;width:1px;height:22px;background:#a0a0a0"></div>
<div class="ab" style="left:1331px;top:390px;width:1px;height:22px;background:#a0a0a0"></div>
<div class="t" style="right:712px;top:394.5px;font-family:'Liberation Sans', sans-serif;font-size:13px;letter-spacing:0.65px;color:#000">10</div>
<div class="t" style="right:562px;top:392px;font-family:'Liberation Serif', serif;font-size:14px;letter-spacing:0.35px;color:#000">October</div>
<div class="t" style="right:441px;top:392px;font-family:'Liberation Sans', sans-serif;font-size:13px;letter-spacing:0.85px;color:#000">0.00</div>
<div class="ab" style="left:982px;top:433px;width:350px;height:1px;background:#a0a0a0"></div>
<div class="ab" style="left:1061px;top:412px;width:1px;height:22px;background:#a0a0a0"></div>
<div class="ab" style="left:1211px;top:412px;width:1px;height:22px;background:#a0a0a0"></div>
<div class="ab" style="left:1331px;top:412px;width:1px;height:22px;background:#a0a0a0"></div>
<div class="t" style="right:712px;top:416.5px;font-family:'Liberation Sans', sans-serif;font-size:13px;letter-spacing:0.65px;color:#000">11</div>
<div class="t" style="right:562px;top:414px;font-family:'Liberation Serif', serif;font-size:14px;letter-spacing:0.35px;color:#000">November</div>
<div class="t" style="right:441px;top:414px;font-family:'Liberation Sans', sans-serif;font-size:13px;letter-spacing:0.85px;color:#000">159.71</div>
<div class="ab" style="left:982px;top:455px;width:350px;height:1px;background:#a0a0a0"></div>
<div class="ab" style="left:1061px;top:434px;width:1px;height:22px;background:#a0a0a0"></div>
<div class="ab" style="left:1211px;top:434px;width:1px;height:22px;background:#a0a0a0"></div>
<div class="ab" style="left:1331px;top:434px;width:1px;height:22px;background:#a0a0a0"></div>
<div class="t" style="right:712px;top:438.5px;font-family:'Liberation Sans', sans-serif;font-size:13px;letter-spacing:0.65px;color:#000">12</div>
<div class="t" style="right:562px;top:436px;font-family:'Liberation Serif', serif;font-size:14px;letter-spacing:0.35px;color:#000">December</div>
<div class="t" style="right:441px;top:436px;font-family:'Liberation Sans', sans-serif;font-size:13px;letter-spacing:0.85px;color:#000">3482.30</div>
</body></html>
